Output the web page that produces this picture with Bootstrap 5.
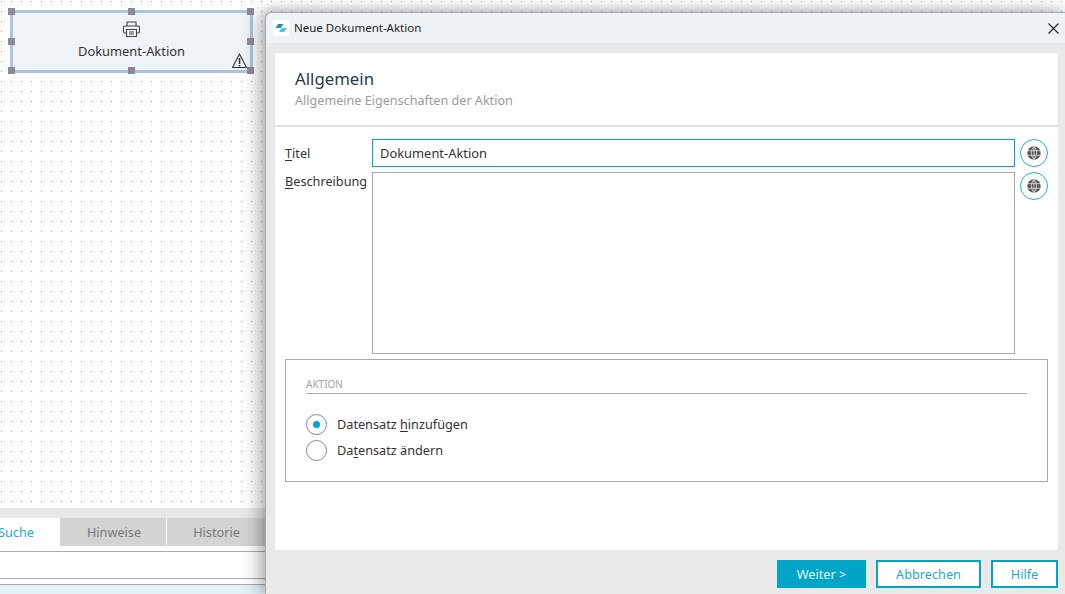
<!doctype html>
<html lang="de">
<head>
<meta charset="utf-8">
<title>Neue Dokument-Aktion</title>
<link href="https://cdn.jsdelivr.net/npm/bootstrap@5.3.0/dist/css/bootstrap.min.css" rel="stylesheet">
<style>
html,body{height:100%;margin:0;overflow:hidden}
body{font-family:"Noto Sans","Open Sans",sans-serif;font-size:12.7px;color:#333;background:#fff}
u{text-underline-offset:2px}
.stage{height:594px;width:1065px;position:relative;overflow:hidden}
.canvas-area{height:508px;background-color:#fff;background-image:radial-gradient(circle at .75px .75px,#aaa .7px,transparent .8px);background-size:10px 10px;background-position:1px 1px}
.strip{height:10px;background:#e8e8e8}
.tabrow{height:28px}
.tab-on{width:60px;color:#1fa7cf;font-size:12.7px;line-height:28px;padding-right:26px;background:#fff;white-space:nowrap}
.tab-off{width:106px;margin-right:1px;padding-left:2px;background:#d3d3d3;color:#777;font-size:12.7px;line-height:28px;text-align:center}
.tab-short{width:99px;padding-left:0}
.rule1{height:6px;border-bottom:1px solid #aaa}
.rule2{height:27px;border-bottom:1px solid #aaa;background:#fff}
.rule3{height:6px;border-bottom:1px solid #aaa}
.tint{height:9px;background:#e3f1f7}
.flow-node{position:absolute;left:10px;top:10px;width:243px;height:63px;border:3px solid #a9c6de;background:#eef3f8;color:#333;text-align:center}
.flow-node svg.printer{display:block;margin:8px auto 0}
.flow-node .node-label{display:block;margin-top:5px;line-height:18px;font-size:12.9px}
.handle{position:absolute;width:7px;height:7px;background:#8d889c}
.warn{position:absolute;right:3px;bottom:1px}
.dialog{position:absolute;left:265px;top:12px;width:800px;height:582px;background:#e9e9e9;border:1px solid #aaa;border-right:0;border-bottom:0;border-top-left-radius:6px;box-shadow:-6px 0 18px rgba(0,0,0,.3),0 -3px 8px rgba(0,0,0,.1);display:flex;flex-direction:column}
.dlg-title{height:30px;background:#edf3f5;border-top-left-radius:6px;padding-left:7px;gap:5px;font-size:11.5px;color:#222}
.dlg-logo{width:16px;height:16px;background:#fff;display:block;flex:none}
.dlg-close{margin-left:auto;margin-right:6px;border:0;background:none;padding:0;line-height:0}
.dlg-main{padding:10px 7px 0 9px;flex:1;display:flex;flex-direction:column}
.head-panel{height:72px;background:#fff;padding:14px 20px;box-shadow:0 1px 2px rgba(0,0,0,.08)}
.head-title{font-size:16.8px;line-height:24px;color:#2d3a4a;margin:0;font-weight:400}
.head-sub{font-size:12.6px;line-height:18px;margin-top:1px;color:#9a9a9a}
.body-panel{height:423px;margin-top:2px;background:#fff;padding:12px 10px 0}
.field-row{gap:5px}
.field-row-next{margin-top:5px}
.field-label{width:82px;flex:none;line-height:28px;margin:0;font-size:12.7px;color:#333}
.field-label-top{line-height:18px}
.field-input.form-control{height:28px;min-height:0;padding:0 7px;font-size:12.9px;color:#333;border:1px solid #00a5c8;border-radius:0;box-shadow:none;flex:1}
.field-area.form-control{height:182px;padding:0 7px;border:1px solid #aaa;border-radius:0;box-shadow:none;flex:1;resize:none}
.globe{width:28px;height:28px;flex:none;padding:0;border:1px solid #1fb0d3;border-radius:50%;background:#fff;display:flex;align-items:center;justify-content:center}
.group-box{margin-top:5px;height:123px;border:1px solid #aaa;padding:16px 20px 0}
.group-cap{font-size:10px;line-height:16px;color:#a3a3a3;border-bottom:1px solid #aaa;height:18px}
.radio-row{height:26px;gap:10px;font-size:12.7px;color:#333;cursor:default}
.radio-list{margin-top:17px;padding-top:1px}
.radio-dot{width:21px;height:21px;margin-bottom:2px;border:1px solid #888;border-radius:50%;background:#fff;flex:none;display:flex;align-items:center;justify-content:center}
.radio-dot i{display:block;width:7px;height:7px;border-radius:50%;background:#00a5c8}
.dlg-foot{height:44px;gap:10px;padding:10px 0 0;justify-content:flex-end}
.foot-btn.btn{height:28px;padding:0;border-radius:0;font-size:12.7px;border:2px solid #00a5c8;background:#fff;color:#1fa7cf;line-height:24px}
.foot-btn.btn-first{width:89px;background:#00a5c8;color:#e6f7fb}
.w-abbr{width:105px}
.w-hilfe{width:67px}
</style>
</head>
<body>
<div class="stage">
  <div class="canvas-area"></div>
  <div class="strip"></div>
  <div class="d-flex tabrow">
    <div class="tab-on d-flex justify-content-end">Suche</div>
    <div class="tab-off">Hinweise</div>
    <div class="tab-off tab-short">Historie</div>
  </div>
  <div class="rule1"></div>
  <div class="rule2"></div>
  <div class="rule3"></div>
  <div class="tint"></div>

  <div class="flow-node">
    <svg class="printer" width="17" height="16" viewBox="0 0 17 16" fill="none" stroke="#444" stroke-width="1.1"><path d="M4 5V1h9v4"/><path d="M3.500 12H2a1.500 1.500 0 0 1-1.500-1.500v-4A1.500 1.500 0 0 1 2 5h13a1.500 1.500 0 0 1 1.500 1.500v4A1.500 1.500 0 0 1 15 12h-1.500"/><path d="M3.500 8.500h10v7h-10z"/><path d="M6 11h5M6 13h5"/></svg>
    <span class="node-label">Dokument-Aktion</span>
    <svg class="warn" width="15" height="16" viewBox="0 0 15 16" fill="none" stroke="#333" stroke-width="1.1"><path d="M7.500 1 14.500 14.500H.5z" stroke-linejoin="round"/><path d="M7.500 5v6M7.500 12v1.500" stroke-width="1.600"/></svg>
    <span class="handle" style="left:-5px;top:-5px"></span>
    <span class="handle" style="left:115px;top:-5px"></span>
    <span class="handle" style="left:234px;top:-5px"></span>
    <span class="handle" style="left:-5px;top:25px"></span>
    <span class="handle" style="left:234px;top:25px"></span>
    <span class="handle" style="left:-5px;top:54px"></span>
    <span class="handle" style="left:115px;top:54px"></span>
    <span class="handle" style="left:234px;top:54px"></span>
  </div>

  <div class="dialog">
    <div class="d-flex align-items-center dlg-title">
      <svg class="dlg-logo" viewBox="0 0 16 16"><path d="M5 4h5.500L7.500 8H2.500z" fill="#1b8fb5"/><path d="M8.500 8h5.500l-3 4H6z" fill="#4fc3de"/></svg>
      <span>Neue Dokument-Aktion</span>
      <button class="dlg-close" type="button" aria-label="Schließen"><svg width="11" height="11" viewBox="0 0 11 11" stroke="#222" stroke-width="1.100"><path d="M.5.5l10 10M10.500.5l-10 10"/></svg></button>
    </div>
    <div class="dlg-main">
      <div class="head-panel">
        <h5 class="head-title">Allgemein</h5>
        <div class="head-sub">Allgemeine Eigenschaften der Aktion</div>
      </div>
      <div class="body-panel">
        <div class="d-flex field-row">
          <label class="field-label"><u>T</u>itel</label>
          <input class="form-control field-input" type="text" value="Dokument-Aktion">
          <button class="globe" type="button" aria-label="Übersetzen"><svg width="14" height="14" viewBox="0 0 14 14" fill="#555" stroke="#eee" stroke-width=".75"><circle cx="7" cy="7" r="6.700" stroke="none"/><path fill="none" d="M.5 4.700h13M.5 9.300h13M7 .5v13M7 .5C3.500 4 3.500 10 7 13.500M7 .5c3.500 3.500 3.500 9.500 0 13"/></svg></button>
        </div>
        <div class="d-flex field-row field-row-next">
          <label class="field-label field-label-top"><u>B</u>eschreibung</label>
          <textarea class="form-control field-area"></textarea>
          <button class="globe" type="button" aria-label="Übersetzen"><svg width="14" height="14" viewBox="0 0 14 14" fill="#555" stroke="#eee" stroke-width=".75"><circle cx="7" cy="7" r="6.700" stroke="none"/><path fill="none" d="M.5 4.700h13M.5 9.300h13M7 .5v13M7 .5C3.500 4 3.500 10 7 13.500M7 .5c3.500 3.500 3.500 9.500 0 13"/></svg></button>
        </div>
        <div class="group-box">
          <div class="group-cap">AKTION</div>
          <div class="radio-list">
            <div class="d-flex align-items-center radio-row"><span class="radio-dot"><i></i></span><span>Datensatz <u>h</u>inzufügen</span></div>
            <div class="d-flex align-items-center radio-row"><span class="radio-dot"></span><span>Da<u>t</u>ensatz ändern</span></div>
          </div>
        </div>
      </div>
      <div class="d-flex dlg-foot">
        <button class="btn foot-btn btn-first" type="button">Weiter &gt;</button>
        <button class="btn foot-btn w-abbr" type="button">Abbrechen</button>
        <button class="btn foot-btn w-hilfe" type="button">Hilfe</button>
      </div>
    </div>
  </div>
</div>
</body>
</html>
